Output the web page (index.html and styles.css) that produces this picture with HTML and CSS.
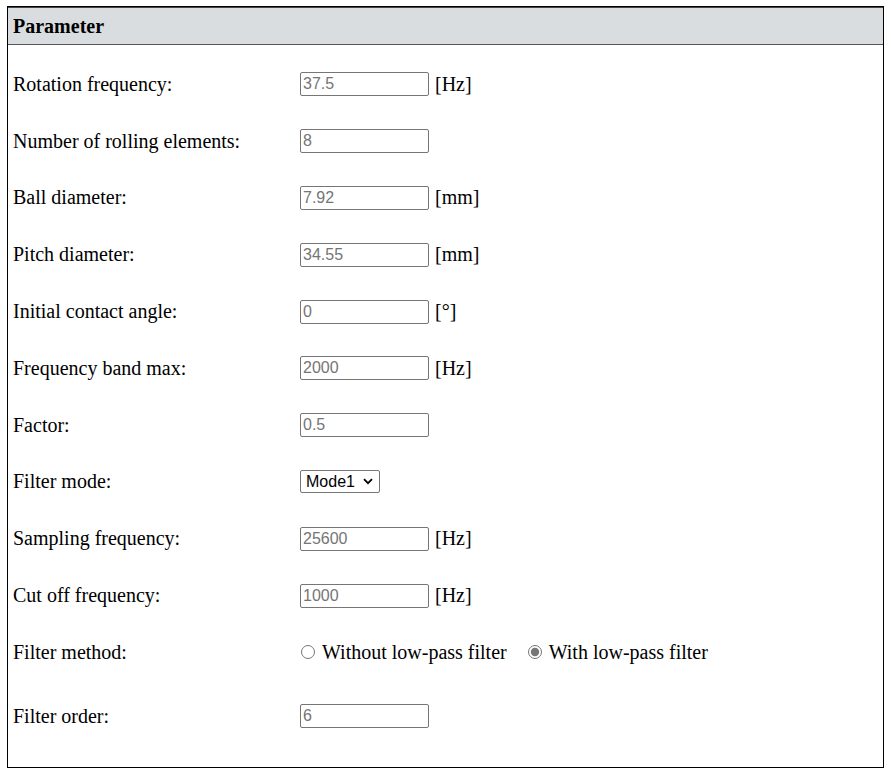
FILE: index.html
```html
<!DOCTYPE html>
<html>
<head>
<meta charset="utf-8">
<link rel="stylesheet" href="styles.css">
</head>
<body>
<div class="panel">
  <div class="panel-head">Parameter</div>
  <div class="panel-body">
    <div class="row"><span class="label">Rotation frequency:</span><input class="field" placeholder="37.5"><span class="unit">[Hz]</span></div>
    <div class="row"><span class="label">Number of rolling elements:</span><input class="field" placeholder="8"></div>
    <div class="row"><span class="label">Ball diameter:</span><input class="field" placeholder="7.92"><span class="unit">[mm]</span></div>
    <div class="row"><span class="label">Pitch diameter:</span><input class="field" placeholder="34.55"><span class="unit">[mm]</span></div>
    <div class="row"><span class="label">Initial contact angle:</span><input class="field" placeholder="0"><span class="unit">[°]</span></div>
    <div class="row"><span class="label">Frequency band max:</span><input class="field" placeholder="2000"><span class="unit">[Hz]</span></div>
    <div class="row"><span class="label">Factor:</span><input class="field" placeholder="0.5"></div>
    <div class="row"><span class="label">Filter mode:</span>
      <span class="select-wrap">
        <select class="mode"><option>Mode1</option><option>Mode2</option></select>
        <svg class="chev" width="10" height="7" viewBox="0 0 10 7"><path d="M1 1.2 L5 5.2 L9 1.2" fill="none" stroke="#000" stroke-width="1.8"/></svg>
      </span>
    </div>
    <div class="row"><span class="label">Sampling frequency:</span><input class="field" placeholder="25600"><span class="unit">[Hz]</span></div>
    <div class="row"><span class="label">Cut off frequency:</span><input class="field" placeholder="1000"><span class="unit">[Hz]</span></div>
    <div class="row row-radio"><span class="label">Filter method:</span>
      <label class="opt"><input type="radio" name="fm" class="radio">Without low-pass filter</label>
      <label class="opt"><input type="radio" name="fm" class="radio" checked>With low-pass filter</label>
    </div>
    <div class="row"><span class="label">Filter order:</span><input class="field" placeholder="6"></div>
  </div>
</div>
</body>
</html>
```
FILE: styles.css
```css
html, body {
  margin: 0;
  padding: 0;
  background: #fff;
}
body {
  padding: 6px 7px;
  font-family: "Liberation Serif", "Times New Roman", serif;
  font-size: 20px;
  color: #000;
}
.panel {
  width: 875px;
  height: 760px;
  border: 1px solid #000;
  box-sizing: content-box;
  display: flex;
  flex-direction: column;
}
.panel-head {
  height: 38px;
  background: #d9dde0;
  border-bottom: 1px solid #555;
  box-shadow: inset 0 1px 0 #444;
  font-weight: bold;
  font-size: 20px;
  display: flex;
  align-items: center;
  padding: 2px 0 0 5px;
  box-sizing: border-box;
}
.panel-body {
  padding: 11px 5px 0 5px;
}
.row {
  height: 56.8px;
  display: flex;
  align-items: center;
}
.row-radio {
  margin-bottom: 7px;
}
.label {
  width: 287px;
  flex: none;
}
.field {
  width: 129px;
  height: 24px;
  box-sizing: border-box;
  border: 1px solid #767676;
  border-radius: 2px;
  padding: 1px 2px;
  font-family: "Liberation Sans", Arial, sans-serif;
  font-size: 16px;
  margin: 0;
}
.field::placeholder {
  color: #757575;
}
.unit {
  margin-left: 6px;
}
.select-wrap {
  position: relative;
  display: inline-flex;
}
.mode {
  -webkit-appearance: none;
  appearance: none;
  font-family: "Liberation Sans", Arial, sans-serif;
  font-size: 16px;
  width: 80px;
  height: 23px;
  box-sizing: border-box;
  border: 1px solid #767676;
  border-radius: 2px;
  margin: 0;
  padding: 0 0 0 5px;
  background: #fff;
  color: #000;
}
.chev {
  position: absolute;
  right: 7px;
  top: 8px;
  pointer-events: none;
}
.opt {
  display: inline-flex;
  align-items: center;
  margin-right: 20px;
}
.radio {
  margin: 0 7px 0 1px;
  width: 14px;
  height: 14px;
  accent-color: #767676;
}
```
